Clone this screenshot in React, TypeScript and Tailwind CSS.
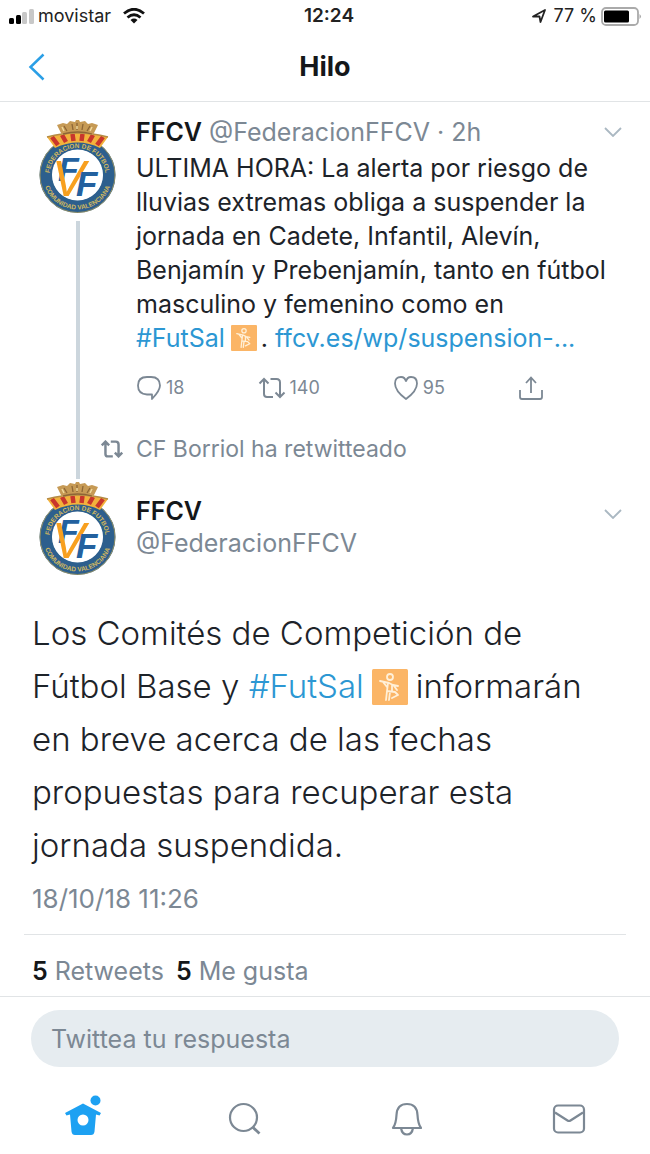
import React from "react";

interface IconProps {
  className?: string;
}

interface ActionProps {
  label: string;
  count?: number;
  children: React.ReactNode;
}

const ClubAvatar: React.FC<{ id: string }> = ({ id }) => (
  <svg viewBox="0 0 79 94" className="w-[79px] h-[94px] shrink-0" role="img" aria-label="FFCV">
    <defs>
      <path id={`${id}-top`} d="M11.500 57a28 28 0 0 1 56 0" />
      <path id={`${id}-bottom`} d="M5 56a34.500 34.500 0 0 0 69 0" />
    </defs>
    {/* ring */}
    <circle cx="39.500" cy="56" r="31.500" fill="none" stroke="#2d5f8d" strokeWidth="13" />
    <circle cx="39.500" cy="56" r="37.500" fill="none" stroke="#a99b5c" strokeWidth="0.800" />
    <circle cx="39.500" cy="56" r="25.500" fill="#fff" />
    {/* senyera band */}
    <path d="M9 18q30-8 61 0l-8 11q-22-11-45 0z" fill="#f3b23c" />
    <path d="M14 18l6 8M24 16l4 7M34.500 15l1 7M44.500 15l-1 7M55 16l-4 7M65 18l-6 8" stroke="#c8362c" strokeWidth="4.500" />
    <path d="M9 18q30-8 61 0" stroke="#b58b45" strokeWidth="1.500" fill="none" />
    {/* crown */}
    <path d="M24 16 19 6l6-2 4 1 3-3 5 1 1-2h3l1 2 5-1 3 3 4-1 6 2-5 10q-16-4-31 0z" fill="#c69a55" />
    <path d="M26 7l3 5m5-7 1 6m4-7v7m6-6-1 6m8-4-3 5M25 15q15-4 29 0" stroke="#8d6636" strokeWidth="1.300" fill="none" />
    <path d="M24 8l2 4m13-5v3m15-2-2 4" stroke="#f0d99c" strokeWidth="1.500" fill="none" />
    <g fill="#d3b95f" fontFamily="'Liberation Sans', sans-serif" fontWeight="700" fontSize="6.500">
      <text>
        <textPath href={`#${id}-top`} startOffset="50%" textAnchor="middle">
          FEDERACION DE FUTBOL
        </textPath>
      </text>
      <text>
        <textPath href={`#${id}-bottom`} startOffset="50%" textAnchor="middle">
          COMUNIDAD VALENCIANA
        </textPath>
      </text>
    </g>
    <g fontFamily="'Liberation Sans', sans-serif" fontWeight="700" fontStyle="italic">
      <text x="20" y="62" fontSize="34" fill="#23619f">F</text>
      <text x="14" y="77" fontSize="50" fontWeight="400" fill="#f8a01f">V</text>
      <text x="38" y="77" fontSize="35" fill="#23619f">F</text>
    </g>
  </svg>
);

const FutsalBadge: React.FC<IconProps> = ({ className }) => (
  <svg viewBox="0 0 36 36" className={className} role="img" aria-label="Fútbol sala">
    <rect width="36" height="36" rx="1.500" fill="#fbb566" />
    <g stroke="#fff0d8" strokeWidth="1.800" fill="none" strokeLinecap="round" strokeLinejoin="round">
      <circle cx="18" cy="8" r="3" />
      <path d="M8 12l9 2 4 2 5 1M16 14l-1 8 8 1 3 3-6 3M15 22l-1 9M20 16v6M11 13l4 5M22 17l3 4M18 23l-1 8" />
    </g>
  </svg>
);

const RetweetIcon: React.FC<IconProps> = ({ className }) => (
  <svg viewBox="0 0 28 22" className={className} fill="none" stroke="currentColor">
    <path d="M1.500 6.500 6 2l4.500 4.500M6 2.500V17q0 3 3 3h6M12.500 2h6q3.500 0 3.500 3.500V19M17.500 15.500 22 20l4.500-4.500" />
  </svg>
);

const ChevronDown = () => (
  <svg viewBox="0 0 18 10" className="w-[18px] h-[10px]" fill="none" stroke="#aab8c2" strokeWidth="1.800">
    <path d="M1 1l8 8 8-8" />
  </svg>
);

const Action: React.FC<ActionProps> = ({ label, count, children }) => (
  <button aria-label={label} className="flex items-center gap-1 text-lg leading-6">
    {children}
    {count !== undefined && <span>{count}</span>}
  </button>
);

const StatusBar = () => (
  <div className="grid grid-cols-3 items-center h-8 px-2 text-lg text-[#222]">
    <div className="flex items-center gap-1">
      <svg viewBox="0 0 26 16" className="w-[26px] h-4">
        <rect x="1" y="10" width="5" height="6" rx="1.500" fill="#000" />
        <rect x="8" y="7" width="5" height="9" rx="1.500" fill="#000" />
        <rect x="14" y="4" width="5" height="12" rx="1.500" fill="#c8c8c8" />
        <rect x="21" y="1" width="5" height="15" rx="1.500" fill="#c8c8c8" />
      </svg>
      <span className="mr-2">movistar</span>
      <svg viewBox="0 0 22 16" className="w-[22px] h-4" fill="none" stroke="#111" strokeWidth="2.800">
        <path d="M1 5.500q10-8.500 20 0M4.500 9.500q6.500-5.500 13 0" />
        <path d="M7.500 12q3.500-2.800 7 0L11 15.500z" fill="#111" stroke="none" />
      </svg>
    </div>
    <span className="pl-2 text-center text-[19px] font-semibold">12:24</span>
    <div className="flex items-center justify-end">
      <svg viewBox="0 0 14 14" className="w-[14px] h-[14px] mr-2" fill="none" stroke="#222" strokeWidth="1.800" strokeLinejoin="round">
        <path d="M1 7.500 13 1 8.500 13 7.500 7.500z" />
      </svg>
      <span className="mr-1">77 %</span>
      <svg viewBox="0 0 41 19" className="w-[41px] h-[19px]">
        <rect x="1" y="1" width="36" height="17" rx="4" fill="#fff" stroke="#aaa" strokeWidth="1.800" />
        <rect x="3" y="3.500" width="25" height="12" rx="1.500" fill="#000" />
        <path d="M38.500 7q3 2.500 0 5z" fill="#aaa" />
      </svg>
    </div>
  </div>
);

const App: React.FC = () => {
  return (
    <div className="bg-white text-[#1d2329] font-['Inter','Liberation_Sans',sans-serif]">
      <StatusBar />

      <header className="grid grid-cols-3 items-center h-[70px] px-7 border-b border-[#e1e4e6]">
        <button aria-label="Volver" className="justify-self-start">
          <svg viewBox="0 0 17 28" className="w-[17px] h-7" fill="none" stroke="#2b9fe6" strokeWidth="2.500">
            <path d="M15.500 1.500 2.500 14l13 12.500" />
          </svg>
        </button>
        <h1 className="text-center text-[27px] leading-8 font-bold text-[#14171a]">Hilo</h1>
      </header>

      <main>
        <article className="flex gap-[19px] pt-[13px] pl-[38px] pr-7">
          <div className="flex flex-col items-center shrink-0 pt-1">
            <ClubAvatar id="first" />
            <div className="w-1 flex-1 mt-2 bg-[#ccd6dd]" />
          </div>
          <div className="flex-1 min-w-0">
            <div className="flex items-center justify-between h-[34px]">
              <p className="text-[25px] leading-[34px] text-[#7c8894] whitespace-nowrap">
                <strong className="font-semibold text-[#14171a]">FFCV</strong> @FederacionFFCV · 2h
              </p>
              <button aria-label="Más opciones">
                <ChevronDown />
              </button>
            </div>
            <p className="mt-0.5 text-[25px] leading-[34px]">
              ULTIMA HORA: La alerta por riesgo de lluvias extremas obliga a suspender la jornada en Cadete,
              Infantil, Alevín, Benjamín y Prebenjamín, tanto en fútbol masculino y femenino como en{" "}
              <span className="whitespace-nowrap">
                <a href="#futsal" className="text-[#2c97d3]">#FutSal</a>
                <FutsalBadge className="inline-block align-[-4px] w-[26px] h-[26px] ml-1.5 mr-1" />.
              </span>{" "}
              <a href="#suspension" className="text-[#2c97d3]">ffcv.es/wp/suspension-...</a>
            </p>
            <div className="flex justify-between mt-5 pr-[78px] text-[#7c8894]">
              <Action label="Responder" count={18}>
                <svg viewBox="0 0 26 26" className="w-[26px] h-[26px]" fill="none" stroke="currentColor" strokeWidth="1.800" strokeLinejoin="round">
                  <path d="M16 24v-4.500h-5Q2 19 2 10.500T11 2h4q9 0 9 8.500 0 5-8 13.500z" />
                </svg>
              </Action>
              <Action label="Retwittear" count={140}>
                <RetweetIcon className="w-7 h-[22px] stroke-2" />
              </Action>
              <Action label="Me gusta" count={95}>
                <svg viewBox="0 0 26 26" className="w-[26px] h-[26px]" fill="none" stroke="currentColor" strokeWidth="1.800">
                  <path d="M13 24Q2 16 2 8.500 2 2 8 2q4 0 5 4.500Q14 2 18 2q6 0 6 6.500Q24 16 13 24z" />
                </svg>
              </Action>
              <Action label="Compartir">
                <svg viewBox="0 0 26 26" className="w-[26px] h-[26px]" fill="none" stroke="currentColor" strokeWidth="1.800">
                  <path d="M2 15v7q0 2 2 2h18q2 0 2-2v-7M13 18V3M8 8l5-5.500L18 8" />
                </svg>
              </Action>
            </div>
            <div className="flex items-center gap-3 mt-8 mb-[14px] -ml-9 text-[23px] leading-8 text-[#7c8894]">
              <RetweetIcon className="w-6 h-[18px] stroke-3" />
              <span>CF Borriol ha retwitteado</span>
            </div>
          </div>
        </article>

        <article>
          <div className="flex gap-[19px] pt-0.5 pl-[38px] pr-7">
            <ClubAvatar id="second" />
            <div className="flex-1 flex justify-between items-start pt-[14px]">
              <div className="text-[25px] leading-8">
                <p className="font-semibold text-[#14171a]">FFCV</p>
                <p className="text-[#7c8894]">@FederacionFFCV</p>
              </div>
              <button aria-label="Más opciones" className="flex mt-[14px]">
                <ChevronDown />
              </button>
            </div>
          </div>

          <p className="mt-8 px-8 text-[33px] leading-[53px] font-light">
            Los Comités de Competición de Fútbol Base y{" "}
            <a href="#futsal" className="text-[#2c97d3]">#FutSal</a>
            <FutsalBadge className="inline-block align-[-7px] size-9 mx-2" />
            informarán en breve acerca de las fechas propuestas para recuperar esta jornada suspendida.
          </p>
          <time className="block mt-[9px] px-8 text-[26px] leading-9 text-[#7c8894]">18/10/18 11:26</time>

          <div className="flex gap-3 mx-6 mt-[17px] pl-2 pt-5 pb-[9px] border-t border-[#e1e4e6] text-[25px] leading-8 text-[#7c8894]">
            <span>
              <strong className="font-semibold text-[#14171a]">5</strong> Retweets
            </span>
            <span>
              <strong className="font-semibold text-[#14171a]">5</strong> Me gusta
            </span>
          </div>
        </article>
      </main>

      <footer className="border-t border-[#e1e4e6]">
        <div className="px-[31px] pt-[13px]">
          <input
            aria-label="Twittea tu respuesta"
            placeholder="Twittea tu respuesta"
            className="w-full h-[57px] px-5 rounded-full bg-[#e6ecf0] text-[25px] placeholder:text-[#7c8894] outline-none"
          />
        </div>
        <nav className="grid grid-cols-4 justify-items-center items-center h-[87px] pt-4 pl-0.5 text-[#7c8894]">
          <a href="#inicio" aria-label="Inicio">
            <svg viewBox="0 0 38 42" className="w-[38px] h-[42px] -mt-2" fill="#1da1f2">
              <circle cx="31.500" cy="6.500" r="5" />
              <path d="M19 9.500 37 19l-1.500 2.500-3.500-1-1.500 17Q30 41 27 41H11q-3 0-3.500-3.500L6 20.500l-3.500 1L1 19z" />
              <circle cx="19" cy="26" r="5.500" fill="#fff" />
            </svg>
          </a>
          <a href="#buscar" aria-label="Buscar">
            <svg viewBox="0 0 34 34" className="w-[34px] h-[34px]" fill="none" stroke="currentColor" strokeWidth="2.200">
              <circle cx="15.500" cy="15.500" r="13.500" />
              <path d="M24.500 25l7 6.500" strokeWidth="2.800" />
            </svg>
          </a>
          <a href="#notificaciones" aria-label="Notificaciones">
            <svg viewBox="0 0 34 34" className="w-[34px] h-[34px]" fill="none" stroke="currentColor" strokeWidth="2.200" strokeLinejoin="round">
              <path d="M3 26q3-4 3.500-13Q7 2 17 2t10.500 11Q28 22 31 26zM11 26q1 6.500 6 6.500t6-6.500" />
            </svg>
          </a>
          <a href="#mensajes" aria-label="Mensajes">
            <svg viewBox="0 0 34 30" className="w-[34px] h-[30px]" fill="none" stroke="currentColor" strokeWidth="2.200" strokeLinejoin="round">
              <rect x="2" y="1.500" width="30" height="27" rx="4" />
              <path d="M3 8.500l12.500 8q1.500 1 3 0L31 8.500" />
            </svg>
          </a>
        </nav>
      </footer>
    </div>
  );
};

export default App;
